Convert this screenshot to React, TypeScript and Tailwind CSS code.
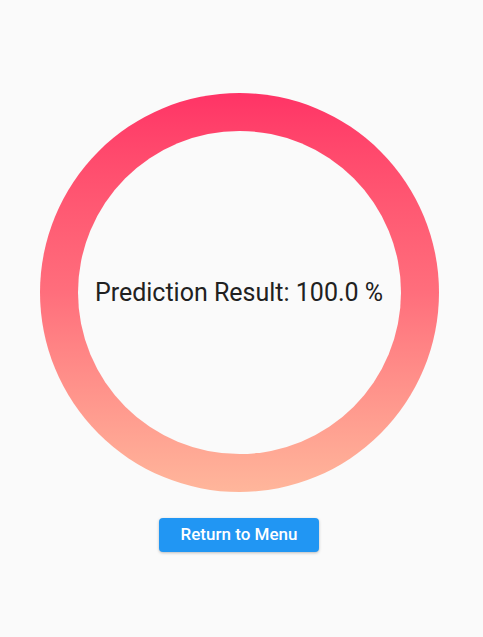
import React from 'react';

const App: React.FC = () => {
  return (
    <div className="min-h-screen w-full bg-[#fafafa] flex flex-col items-center pt-[93px] pr-[5px]" style={{ fontFamily: 'Roboto, "Noto Sans", sans-serif' }}>
      {/* result ring */}
      <div className="w-[399px] h-[399px] rounded-full bg-gradient-to-b from-[#ff3366] via-[#ff6e7c] to-[#ffb69b] p-[38px]">
        <div className="w-full h-full rounded-full bg-[#fafafa] flex items-center justify-center">
          <span className="text-[25px] text-[#212121] whitespace-nowrap">Prediction Result: 100.0 %</span>
        </div>
      </div>

      <button className="mt-[26px] h-[34px] w-[160px] rounded-[4px] bg-[#2196f3] text-white text-[17px] font-medium shadow-[0_1px_3px_rgba(0,0,0,0.25)]">
        Return to Menu
      </button>
    </div>
  );
};

export default App;
